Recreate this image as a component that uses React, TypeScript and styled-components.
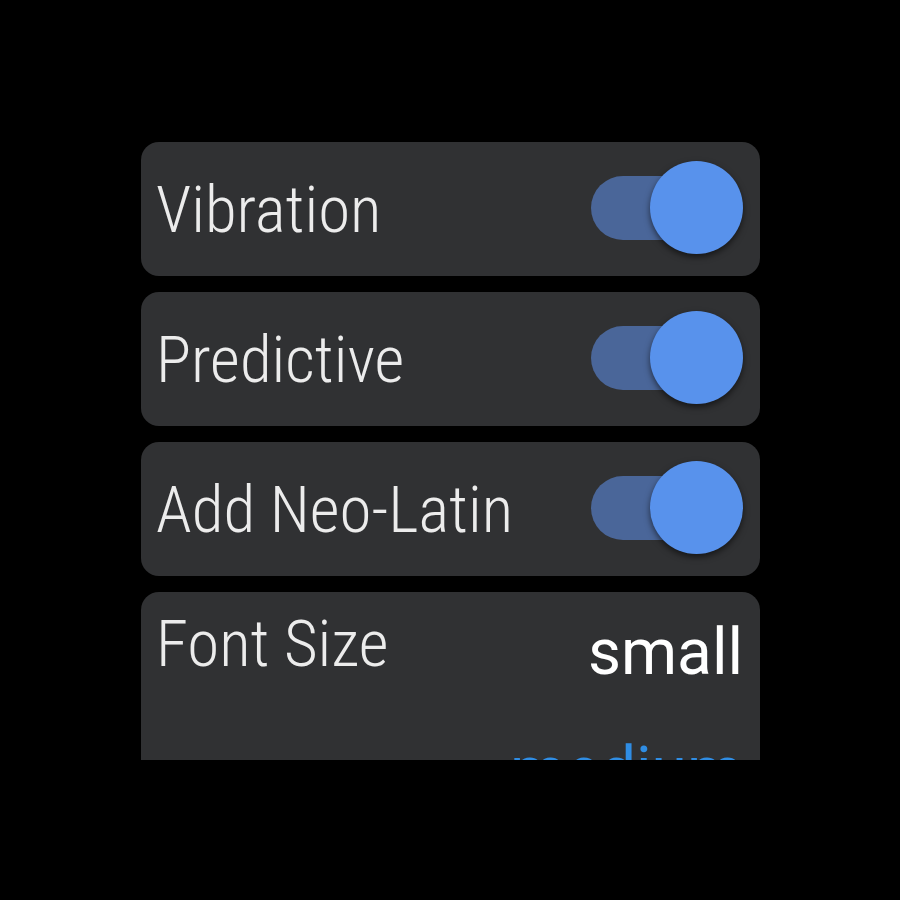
import React from "react";
import styled, { createGlobalStyle } from "styled-components";

const GlobalStyle = createGlobalStyle`
	html, body {
		margin: 0;
		padding: 0;
		background: #000;
	}
`;

const Screen = styled.div`
	width: 900px;
	height: 900px;
	background: #000;
	padding: 142px 140px 0 141px;
	box-sizing: border-box;
`;

const Viewport = styled.div`
	width: 619px;
	height: 618px;
	overflow: hidden;
	display: flex;
	flex-direction: column;
	gap: 16px;
`;

const Card = styled.div<{ $tall?: boolean }>`
	flex: none;
	background: #303133;
	border-radius: 18px;
	height: ${(p) => (p.$tall ? "260px" : "134px")};
	box-sizing: border-box;
	padding: 2px 17px 0 15px;
	display: flex;
	align-items: center;
	justify-content: space-between;
`;

const Label = styled.span`
	font-family: "Roboto Condensed", Roboto, "Liberation Sans", sans-serif;
	font-weight: 300;
	font-size: 65px;
	color: #ececec;
	white-space: nowrap;
`;

const Switch = styled.div`
	position: relative;
	width: 152px;
	height: 94px;
	margin-top: -4px;
	flex: none;
`;

const Track = styled.div`
	position: absolute;
	left: 0;
	top: 15px;
	width: 136px;
	height: 64px;
	border-radius: 32px;
	background: #4a6699;
`;

const Thumb = styled.div`
	position: absolute;
	right: 0;
	top: 0;
	width: 93px;
	height: 93px;
	border-radius: 50%;
	background: #5892ec;
	box-shadow: 0 3px 6px rgba(0, 0, 0, 0.55);
`;

const SizeCard = styled(Card)`
	display: grid;
	grid-template-columns: 1fr auto;
	align-items: start;
	padding-top: 14px;
`;

const Options = styled.div`
	display: flex;
	flex-direction: column;
	align-items: flex-end;
	gap: 54px;
	padding-top: 15px;
`;

const Option = styled.span<{ $active?: boolean }>`
	font-family: Roboto, "Liberation Sans", sans-serif;
	font-weight: 400;
	font-size: 64px;
	line-height: 64px;
	color: ${(p) => (p.$active ? "#2f8de4" : "#ffffff")};
`;

const Toggle: React.FC = () => (
	<Switch>
		<Track />
		<Thumb />
	</Switch>
);

const App: React.FC = () => {
	const toggles = ["Vibration", "Predictive", "Add Neo-Latin"];
	return (
		<>
			<GlobalStyle />
			<Screen>
				<Viewport>
					{toggles.map((t) => (
						<Card key={t}>
							<Label>{t}</Label>
							<Toggle />
						</Card>
					))}
					<SizeCard $tall>
						<Label>Font Size</Label>
						<Options>
							<Option>small</Option>
							<Option $active>medium</Option>
						</Options>
					</SizeCard>
				</Viewport>
			</Screen>
		</>
	);
};

export default App;
